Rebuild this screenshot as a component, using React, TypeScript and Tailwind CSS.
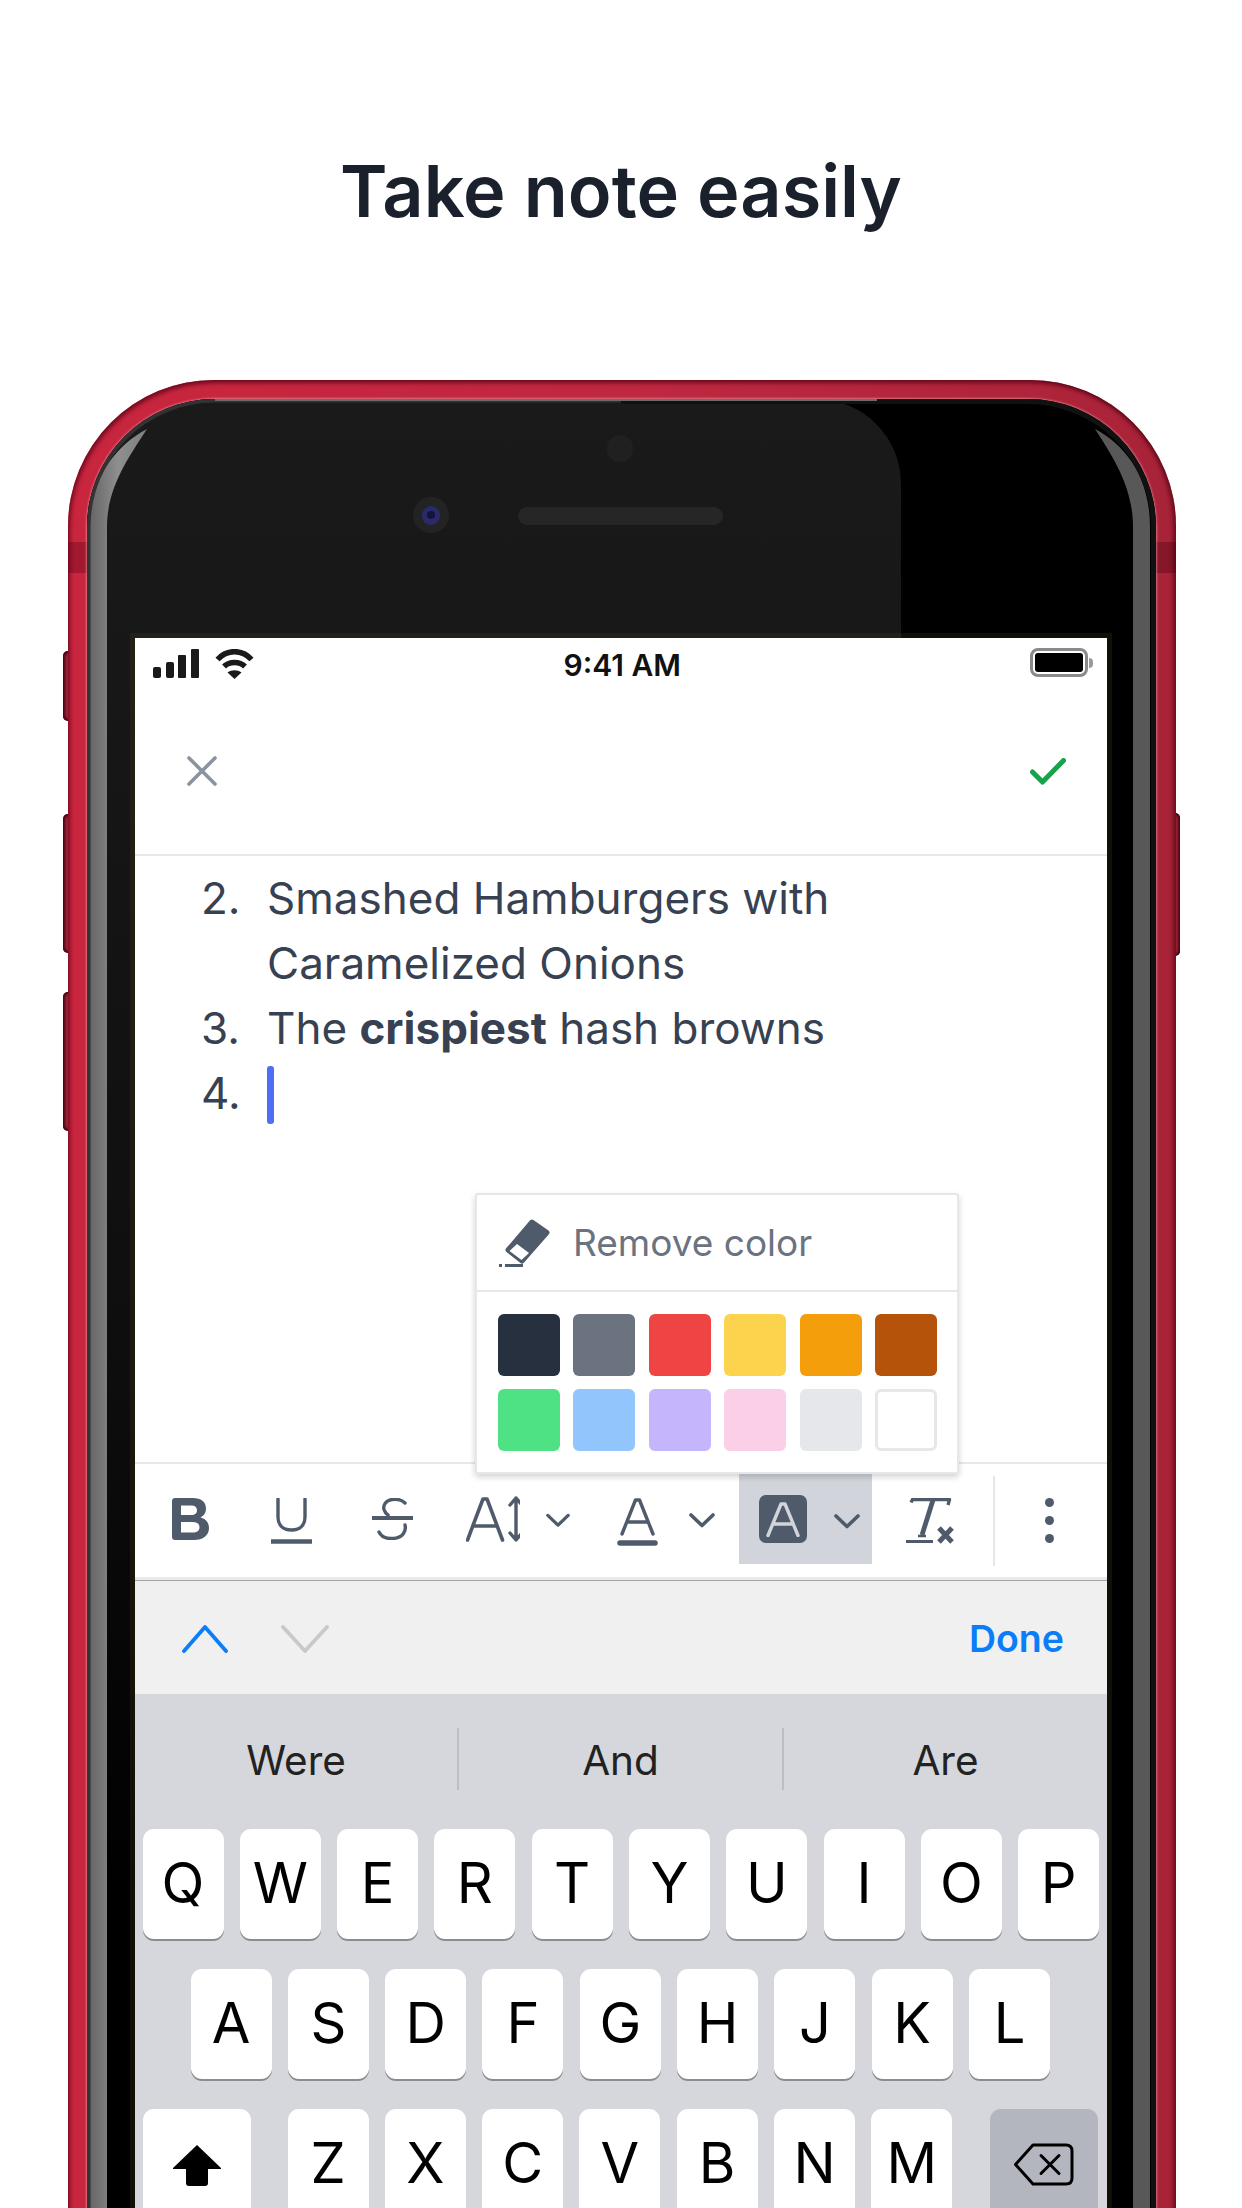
import React from "react";

const font = { fontFamily: '"Inter", "Noto Sans", sans-serif' };
const ink = "#4f5b6b";

function Chevron({ className }: { className: string }) {
  return (
    <svg className={className} width="26" height="15" viewBox="0 0 26 15" fill="none">
      <path d="M2 2 L13 12.5 L24 2" stroke={ink} strokeWidth="3.6" strokeLinecap="round" strokeLinejoin="round" />
    </svg>
  );
}

function Toolbar() {
  return (
    <div className="flex h-[113px] items-center">
      <svg className="ml-[37px] mt-[-3px]" width="37" height="42" viewBox="0 0 37 42">
        <path fillRule="evenodd" fill={ink} d="M3 0H21C29 0 34 4 34 10.500C34 15 31.500 18 28.500 19.500C33 20.500 37 24 37 30C37 37.500 31 42 22 42H3C1.300 42 0 40.700 0 39V3C0 1.300 1.300 0 3 0ZM9 7.500V17H19.500C23 17 25 15.200 25 12.200C25 9.200 23 7.500 19.500 7.500ZM9 24V34.500H20.500C25 34.500 27.500 32.500 27.500 29.200C27.500 26 25 24 20.500 24Z" />
      </svg>
      <svg className="ml-[62px]" width="41" height="46" viewBox="0 0 41 46" fill="none" stroke={ink}>
        <path d="M7 1V19C7 27 12 32 20.500 32C29 32 34 27 34 19V1" strokeWidth="3.400" strokeLinecap="round" />
        <path d="M0 43.500H41" strokeWidth="4.500" />
      </svg>
      <svg className="ml-[60px] mt-[-3px]" width="41" height="42" viewBox="0 0 41 42" fill="none" stroke={ink}>
        <path d="M33 5C29 1 24 1 20 1.500C13 2.500 11 8 12 11.500C12.800 14 14.500 16 16 17" strokeWidth="3.400" strokeLinecap="round" />
        <path d="M0 20H41" strokeWidth="4.200" strokeLinecap="round" />
        <path d="M33 27C34.500 33 31 40 21 40.500C14 41 9 38 7 34" strokeWidth="3.400" strokeLinecap="round" />
      </svg>
      <svg className="ml-[53px] mt-[-3px]" width="54" height="46" viewBox="0 0 54 46" fill="none" stroke={ink} strokeLinecap="round" strokeLinejoin="round">
        <path d="M1.500 44L17 3H21L36.500 44M8 30H30" strokeWidth="3.600" />
        <path d="M50 2V43.500M44 9L50 2L56 9M44 37L50 44L56 37" strokeWidth="3.400" />
      </svg>
      <Chevron className="ml-[26px] w-[24px]" />
      <svg className="ml-[47px] mt-[3px]" width="41" height="48" viewBox="0 0 41 48" fill="none" stroke={ink} strokeLinecap="round">
        <path d="M5 36L18.500 2H22.500L36 36M10 24H31" strokeWidth="3.400" strokeLinejoin="round" />
        <path d="M3 45H38" strokeWidth="5.500" />
      </svg>
      <Chevron className="ml-[31px]" />
      <div className="ml-[24px] mt-[7px] flex h-[93px] w-[133px] items-center self-start bg-[#d1d5db]">
        <div className="ml-[20px] mt-[3px] flex h-[48px] w-[48px] items-center justify-center rounded-[7px] bg-[#4f5b6b]">
          <svg width="34" height="35" viewBox="0 0 34 35" fill="none" stroke="#d1d5db" strokeLinecap="round" strokeLinejoin="round">
            <path d="M2 33.500L15 2H19L32 33.500M7 22H27" strokeWidth="3.400" />
          </svg>
        </div>
        <Chevron className="ml-[27px] mt-[7px]" />
      </div>
      <svg className="ml-[34px]" width="48" height="46" viewBox="0 0 48 46" fill="none" stroke={ink}>
        <path d="M5 4.500L6.500 1.500H43.500L42 7" strokeWidth="3.400" strokeLinejoin="round" />
        <path d="M27 2L16 37" strokeWidth="4.800" />
        <path d="M0 43.500H27" strokeWidth="3" />
        <path d="M12 38H20" strokeWidth="2.500" />
        <path d="M33 30L46 44M46 30L33 44" strokeWidth="5" />
      </svg>
      <div className="ml-[39px] h-[90px] w-[2px] bg-[#e5e7eb]" />
      <div className="ml-[50px] flex flex-col gap-[9px]">
        <div className="h-[9px] w-[9px] rounded-full bg-[#4f5b6b]" />
        <div className="h-[9px] w-[9px] rounded-full bg-[#4f5b6b]" />
        <div className="h-[9px] w-[9px] rounded-full bg-[#4f5b6b]" />
      </div>
    </div>
  );
}

function Key({ label }: { label: string }) {
  return (
    <div className="flex h-[110px] w-[81px] items-center justify-center rounded-[11px] bg-white pb-[2px] text-[56px] leading-none text-black shadow-[0_2px_0_#8b8c91]">
      {label}
    </div>
  );
}

const swatches = [
  ["bg-[#27303f]", "bg-[#6b7280]", "bg-[#ef4444]", "bg-[#fcd34d]", "bg-[#f59e0b]", "bg-[#b45309]"],
  ["bg-[#4fe285]", "bg-[#93c5fd]", "bg-[#c4b5fd]", "bg-[#fbcfe8]", "bg-[#e5e7eb]", "bg-white border-[3px] border-[#e5e7eb]"],
];

function Popup() {
  return (
    <div className="absolute left-[340px] top-[555px] z-10 h-[281px] w-[484px] rounded-[3px] border-[2px] border-[#e5e7eb] bg-white shadow-[0_3px_6px_rgba(0,0,0,0.18)]">
      <div className="flex h-[97px] items-center border-b-[2px] border-[#e5e7eb] pl-[22px]">
        <svg width="52" height="50" viewBox="0 0 52 50" fill="none">
          <path fill="#4f5b6b" stroke="#4f5b6b" strokeWidth="5" strokeLinejoin="round" d="M33 4L48 14.500L23 43L9 32Z" />
          <path fill="#fff" d="M18 26L30 35L22.500 42L10.500 33Z" />
          <path d="M6 47.500H24" stroke="#4f5b6b" strokeWidth="3" />
          <path d="M0 47.500H3" stroke="#4f5b6b" strokeWidth="3" />
        </svg>
        <span className="ml-[22px] text-[37px] leading-none text-[#6b7280]">Remove color</span>
      </div>
      <div className="flex flex-col gap-[13px] pl-[20.500px] pt-[22px]">
        {swatches.map((row, i) => (
          <div key={i} className="flex gap-[13.500px]">
            {row.map((c, j) => (
              <div key={j} className={`h-[62px] w-[62px] rounded-[6px] ${c}`} />
            ))}
          </div>
        ))}
      </div>
    </div>
  );
}

function Screen() {
  const rowOne = "QWERTYUIOP".split("");
  const rowTwo = "ASDFGHJKL".split("");
  const rowThree = "ZXCVBNM".split("");
  return (
    <div className="relative flex h-[1700px] w-[972px] flex-col bg-white shadow-[0_0_0_5px_rgba(80,70,30,0.22)]" style={font}>
      <div className="relative flex h-[60px] shrink-0 items-start pl-[18px] pt-[11px]">
        <div className="flex items-end gap-[4.500px]">
          <div className="h-[11px] w-[8px] rounded-[2px] bg-[#1a1a1a]" />
          <div className="h-[16px] w-[8px] rounded-[2px] bg-[#1a1a1a]" />
          <div className="h-[23px] w-[8px] rounded-[1px] bg-[#1a1a1a]" />
          <div className="h-[29px] w-[8px] rounded-[1px] bg-[#1a1a1a]" />
        </div>
        <svg className="ml-[16px]" width="39" height="30" viewBox="0 0 39 30" fill="none">
          <path d="M2.500 10.500C12 0 27 0 36.500 10.500" stroke="#1a1a1a" strokeWidth="5.500" />
          <path d="M9 17.500C14.500 12 24.500 12 30 17.500" stroke="#1a1a1a" strokeWidth="5.500" />
          <path d="M12.500 23.500C16.500 20.500 22.500 20.500 26.500 23.500L19.500 30Z" fill="#1a1a1a" />
        </svg>
        <div className="flex-1 pl-[26px] pr-[142px] pt-[1px] text-center text-[30px] font-semibold leading-[30px] text-[#111]">
          9:41 AM
        </div>
        <div className="absolute left-[895px] top-[10px] flex items-center">
          <div className="h-[29px] w-[58px] rounded-[8px] border-[3px] border-[#8a8a8a] bg-white p-[2px]">
            <div className="h-full w-full rounded-[3px] bg-black" />
          </div>
          <div className="ml-[1px] h-[10px] w-[4px] rounded-r-full bg-[#9a9a9a]" />
        </div>
      </div>
      <div className="flex h-[158px] shrink-0 items-center justify-between border-b-[2px] border-[#e5e7eb] pb-[10px] pl-[52px] pr-[41px]">
        <svg width="30" height="30" viewBox="0 0 30 30" fill="none" stroke="#8b93a1" strokeWidth="3.600" strokeLinecap="round">
          <path d="M2 2L28 28M28 2L2 28" />
        </svg>
        <svg width="36" height="27" viewBox="0 0 36 27" fill="none" stroke="#16a34a" strokeWidth="5" strokeLinecap="round" strokeLinejoin="round">
          <path d="M2.500 14L12.500 24L33.500 2.500" />
        </svg>
      </div>
      <div className="h-[606px] shrink-0 pt-[10px] text-[44px] leading-[65px] text-[#374151]">
        <div className="flex">
          <span className="w-[132px] pl-[66px]">2.</span>
          <span>
            Smashed Hamburgers with
            <br />
            Caramelized Onions
          </span>
        </div>
        <div className="flex">
          <span className="w-[132px] pl-[66px]">3.</span>
          <span>
            The <b className="font-bold">crispiest</b> hash browns
          </span>
        </div>
        <div className="flex items-center">
          <span className="w-[132px] pl-[66px]">4.</span>
          <div className="mt-[2px] h-[58px] w-[7px] rounded-[3px] bg-[#4f6ef7]" />
        </div>
      </div>
      <Popup />
      <div className="shrink-0 border-t-[2px] border-[#e5e7eb]">
        <Toolbar />
      </div>
      <div className="h-[3px] shrink-0 bg-[#e9eaec]" />
      <div className="h-px shrink-0 bg-[#a3a5a8]" />
      <div className="flex h-[113px] shrink-0 items-center bg-[#f0f0f1] pl-[47px] pr-[43px] pt-[2px]">
        <svg width="46" height="28" viewBox="0 0 46 28" fill="none" stroke="#0a7df8" strokeWidth="3.800" strokeLinecap="round" strokeLinejoin="round">
          <path d="M2 26L23 2L44 26" />
        </svg>
        <svg className="ml-[53px]" width="48" height="28" viewBox="0 0 48 28" fill="none" stroke="#c9c9c9" strokeWidth="3.800" strokeLinecap="round" strokeLinejoin="round">
          <path d="M2 2L24 26L46 2" />
        </svg>
        <span className="ml-auto text-[37.500px] font-semibold leading-none text-[#0a7df8]">Done</span>
      </div>
      <div className="flex-1 bg-[#d5d7dc]">
        <div className="flex h-[135px] items-start pt-[34px]">
          <div className="flex h-[64px] w-[322px] items-center justify-center pt-[2px] text-[40.500px] text-[#222]">Were</div>
          <div className="h-[62px] w-[2px] bg-[#bcbec3]" />
          <div className="flex h-[64px] w-[323px] items-center justify-center pt-[2px] text-[40.500px] text-[#222]">And</div>
          <div className="h-[62px] w-[2px] bg-[#bcbec3]" />
          <div className="flex h-[64px] w-[323px] items-center justify-center pt-[2px] text-[40.500px] text-[#222]">Are</div>
        </div>
        <div className="flex gap-[16.300px] pl-[7.500px]">
          {rowOne.map((k) => (
            <Key key={k} label={k} />
          ))}
        </div>
        <div className="mt-[30px] flex gap-[16.300px] pl-[55.600px]">
          {rowTwo.map((k) => (
            <Key key={k} label={k} />
          ))}
        </div>
        <div className="mt-[30px] flex pl-[7.500px]">
          <div className="flex h-[110px] w-[108px] items-center justify-center rounded-[11px] bg-white shadow-[0_2px_0_#8b8c91]">
            <svg className="mb-[-2px]" width="48" height="41" viewBox="0 0 48 41" fill="#000">
              <path d="M24 0L48 23V24H35V38C35 40 34 41 32 41H16C14 41 13 40 13 38V24H0V23Z" />
            </svg>
          </div>
          <div className="ml-[37px] flex gap-[16.300px]">
            {rowThree.map((k) => (
              <Key key={k} label={k} />
            ))}
          </div>
          <div className="ml-[38px] flex h-[110px] w-[108px] items-center justify-center rounded-[11px] bg-[#b3b6bf] shadow-[0_2px_0_#8b8c91]">
            <svg width="60" height="43" viewBox="0 0 60 43" fill="none" stroke="#000" strokeWidth="3" strokeLinejoin="round" strokeLinecap="round">
              <path d="M1.500 21.500L19 2H52C56 2 58 4 58 8V35C58 39 56 41 52 41H19Z" />
              <path d="M27 12.500L45 30.500M45 12.500L27 30.500" />
            </svg>
          </div>
        </div>
      </div>
    </div>
  );
}

function Phone() {
  return (
    <div className="relative ml-[68px] mt-[147px] h-[1900px] w-[1108px]">
      <div className="absolute left-[-5px] top-[271px] h-[70px] w-[12px] rounded-l-[5px] bg-[#9c2436] shadow-[inset_2px_0_3px_rgba(60,0,15,0.7),inset_0_2px_3px_rgba(60,0,15,0.7),inset_0_-2px_3px_rgba(60,0,15,0.7)]" />
      <div className="absolute left-[-5px] top-[434px] h-[139px] w-[12px] rounded-l-[5px] bg-[#9c2436] shadow-[inset_2px_0_3px_rgba(60,0,15,0.7),inset_0_2px_3px_rgba(60,0,15,0.7),inset_0_-2px_3px_rgba(60,0,15,0.7)]" />
      <div className="absolute left-[-5px] top-[612px] h-[139px] w-[12px] rounded-l-[5px] bg-[#9c2436] shadow-[inset_2px_0_3px_rgba(60,0,15,0.7),inset_0_2px_3px_rgba(60,0,15,0.7),inset_0_-2px_3px_rgba(60,0,15,0.7)]" />
      <div className="absolute right-[-4px] top-[433px] h-[143px] w-[12px] rounded-r-[5px] bg-[#9c2436] shadow-[inset_-2px_0_3px_rgba(60,0,15,0.7),inset_0_2px_3px_rgba(60,0,15,0.7),inset_0_-2px_3px_rgba(60,0,15,0.7)]" />
      <div className="relative h-full rounded-t-[146px] bg-[linear-gradient(to_right,#c9253e_0%,#c02840_50%,#a82338_100%)] pl-[19px] pr-[20px] pt-[19px] shadow-[inset_2px_3px_4px_rgba(90,0,20,0.7),inset_-3px_0_4px_rgba(70,0,15,0.6)]">
        <div className="absolute left-0 top-[162px] h-[31px] w-[19px] bg-[rgba(90,0,20,0.35)]" />
        <div className="absolute right-0 top-[162px] h-[31px] w-[20px] bg-[rgba(70,0,15,0.35)]" />
        <div className="relative h-full overflow-hidden rounded-t-[128px] bg-black pl-[48px] pr-[49px] pt-[239px] shadow-[0_0_2px_1px_rgba(255,190,195,0.5)]">
          <div className="absolute left-0 top-0 h-full w-[814px] rounded-tr-[85px] bg-[linear-gradient(to_bottom,#1a1a1a_0%,#171717_15%,#0e0e0e_50%,#000000_80%)]" />
          <svg className="absolute left-0 top-0" width="1069" height="1900" viewBox="0 0 1069 1900" fill="none">
            <defs>
              <linearGradient id="leftGlass" x1="0" x2="1" y1="0" y2="0">
                <stop offset="0" stopColor="#666666" />
                <stop offset="0.5" stopColor="#8f8f8f" />
                <stop offset="1" stopColor="#7e7e7e" />
              </linearGradient>
            </defs>
            <path d="M3 1900V128C3 82 26 48 60 30C42 58 20 88 20 128V1900Z" fill="url(#leftGlass)" />
            <path d="M1063 1900V128C1063 82 1042 48 1008 30C1026 58 1046 88 1046 128V1900Z" fill="#585858" />
            <path d="M1 1900V128C1 58 58 1 128 1H534" stroke="#333333" strokeWidth="5" />
            <path d="M534 1H941C1011 1 1068 58 1068 128V1900" stroke="#111111" strokeWidth="8" />
            <path d="M128 1H790" stroke="#6a6a6a" strokeWidth="2" />
          </svg>
          <div className="absolute left-[326px] top-[98px] flex h-[36px] w-[36px] items-center justify-center rounded-full bg-[#232323]">
            <div className="flex h-[19px] w-[18px] items-center justify-center rounded-full bg-[#2a2a6a]">
              <div className="h-[8px] w-[8px] rounded-full bg-[#14143a]" />
            </div>
          </div>
          <div className="absolute left-[431px] top-[108px] h-[18px] w-[205px] rounded-full bg-[#262626]" />
          <div className="absolute left-[520px] top-[36px] h-[27px] w-[26px] rounded-full bg-[#202020]" />
          <Screen />
        </div>
      </div>
    </div>
  );
}

export default function App() {
  return (
    <div className="h-[2208px] w-[1242px] overflow-hidden bg-white" style={font}>
      <h1 className="pt-[148px] text-center text-[72px] font-semibold leading-[85px] text-[#1a202c]">Take note easily</h1>
      <Phone />
    </div>
  );
}
